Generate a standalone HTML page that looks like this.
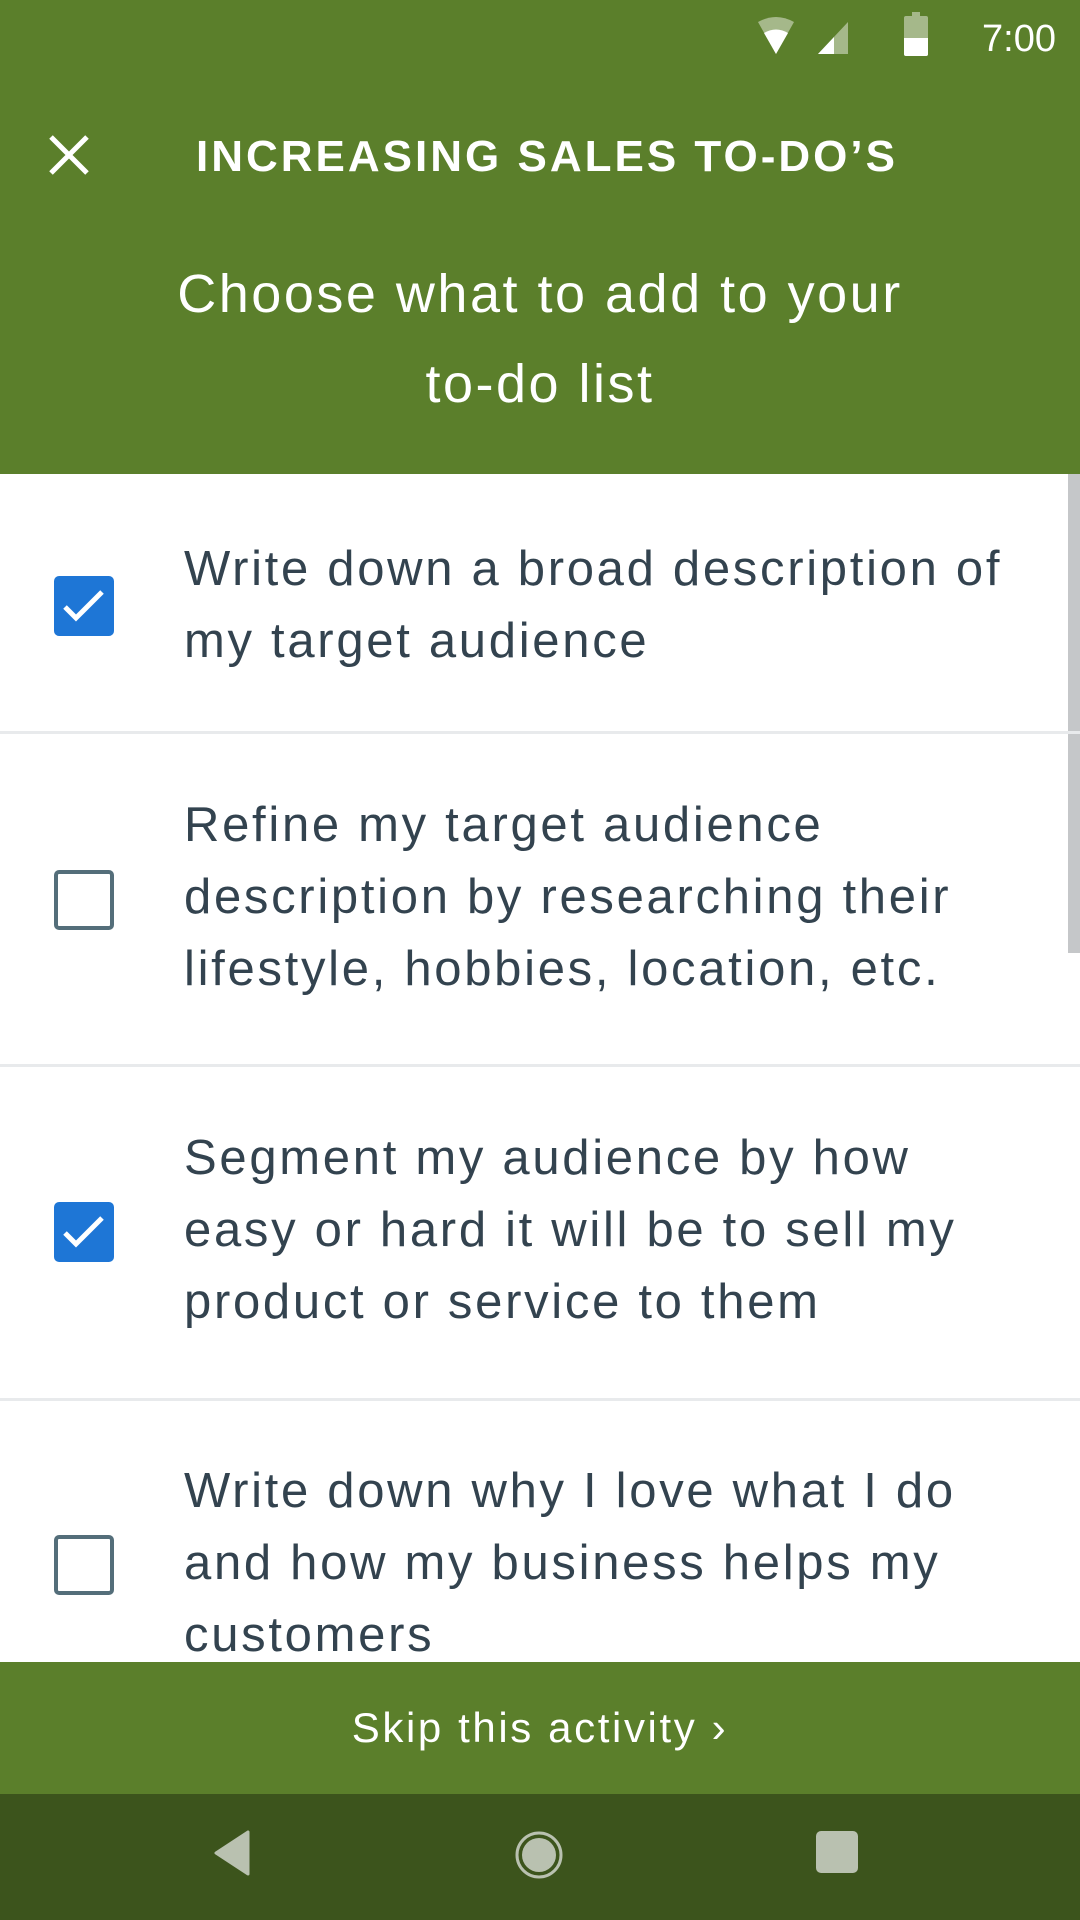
<!DOCTYPE html>
<html><head><meta charset="utf-8"><style>
*{margin:0;padding:0;box-sizing:border-box}
body{width:1080px;height:1920px;position:relative;overflow:hidden;background:#fff;font-family:"Liberation Sans",sans-serif}
.hdr{position:absolute;left:0;top:0;width:1080px;height:474px;background:#5b7f2b;color:#fff}
.time{position:absolute;right:24px;top:18px;font-size:38px}
.title{position:absolute;left:196px;top:132px;font-size:44px;font-weight:bold;letter-spacing:3px}
.sub{position:absolute;left:0;width:1080px;text-align:center;font-size:54px;line-height:90px;top:249px;letter-spacing:2.5px}
.row{position:absolute;left:0;width:1080px;border-bottom:3px solid #e8eaec}
.txt{position:absolute;left:184px;font-size:49px;line-height:72px;color:#33434f;letter-spacing:2.7px;white-space:nowrap}
.cb{position:absolute;left:54px;width:60px;height:60px;border-radius:5px}
.on{background:#1e76d6}
.off{border:4px solid #546e7a}
.bar{position:absolute;left:0;top:1662px;width:1080px;height:132px;background:#5b7f2b;color:#fff;text-align:center;font-size:42px;line-height:132px;letter-spacing:2.6px}
.nav{position:absolute;left:0;top:1794px;width:1080px;height:126px;background:#3c541c}
</style></head><body>
<div class="hdr">
 <svg style="position:absolute;left:756px;top:16px" width="110" height="42" viewBox="0 0 110 42">
  <path d="M2 6 Q20 -4 38 6 L20 38 Z" fill="#fff" opacity="0.45"/>
  <path d="M8 17 Q20 10 32 17 L20 38 Z" fill="#fff"/>
  <path d="M62 38 L92 6 L92 38 Z" fill="#fff" opacity="0.45"/>
  <path d="M62 38 L78 21 L78 38 Z" fill="#fff"/>
 </svg>
 <div style="position:absolute;left:904px;top:16px;width:24px;height:40px;background:rgba(255,255,255,0.45);border-radius:2px"></div>
 <div style="position:absolute;left:904px;top:38px;width:24px;height:18px;background:#fff;border-radius:0 0 2px 2px"></div>
 <div style="position:absolute;left:912px;top:12px;width:8px;height:4px;background:rgba(255,255,255,0.45)"></div>
 <div class="time">7:00</div>
 <svg style="position:absolute;left:48px;top:134px" width="42" height="42" viewBox="0 0 42 42"><path d="M3 3L39 39M39 3L3 39" stroke="#fff" stroke-width="5"/></svg>
 <div class="title">INCREASING SALES TO-DO’S</div>
 <div class="sub">Choose what to add to your<br>to-do list</div>
</div>
<div style="position:absolute;right:0;top:474px;width:12px;height:479px;background:#c5c7c9"></div>

<div class="row" style="top:474px;height:260px">
 <div class="cb on" style="top:102px"><svg width="60" height="60" viewBox="0 0 60 60"><path d="M11 31L22 42L48 16" stroke="#fff" stroke-width="5" fill="none"/></svg></div>
 <div class="txt" style="top:59px">Write down a broad description of<br>my target audience</div>
</div>
<div class="row" style="top:734px;height:333px">
 <div class="cb off" style="top:136px"></div>
 <div class="txt" style="top:55px">Refine my target audience<br>description by researching their<br>lifestyle, hobbies, location, etc.</div>
</div>
<div class="row" style="top:1067px;height:334px">
 <div class="cb on" style="top:135px"><svg width="60" height="60" viewBox="0 0 60 60"><path d="M11 31L22 42L48 16" stroke="#fff" stroke-width="5" fill="none"/></svg></div>
 <div class="txt" style="top:55px">Segment my audience by how<br>easy or hard it will be to sell my<br>product or service to them</div>
</div>
<div class="row" style="top:1401px;height:330px;border:none">
 <div class="cb off" style="top:134px"></div>
 <div class="txt" style="top:54px">Write down why I love what I do<br>and how my business helps my<br>customers</div>
</div>

<div class="bar">Skip this activity ›</div>
<div class="nav">
 <svg style="position:absolute;left:212px;top:36px" width="40" height="46" viewBox="0 0 40 46"><path d="M36 2 L36 44 L4 23 Z" fill="#b9c1b0" stroke="#b9c1b0" stroke-width="3" stroke-linejoin="round"/></svg>
 <svg style="position:absolute;left:514px;top:36px" width="50" height="50" viewBox="0 0 50 50"><circle cx="25" cy="25" r="22" fill="none" stroke="#b9c1b0" stroke-width="3"/><circle cx="25" cy="25" r="17" fill="#b9c1b0"/></svg>
 <div style="position:absolute;left:816px;top:37px;width:42px;height:42px;background:#b9c1b0;border-radius:5px"></div>
</div>
</body></html>
